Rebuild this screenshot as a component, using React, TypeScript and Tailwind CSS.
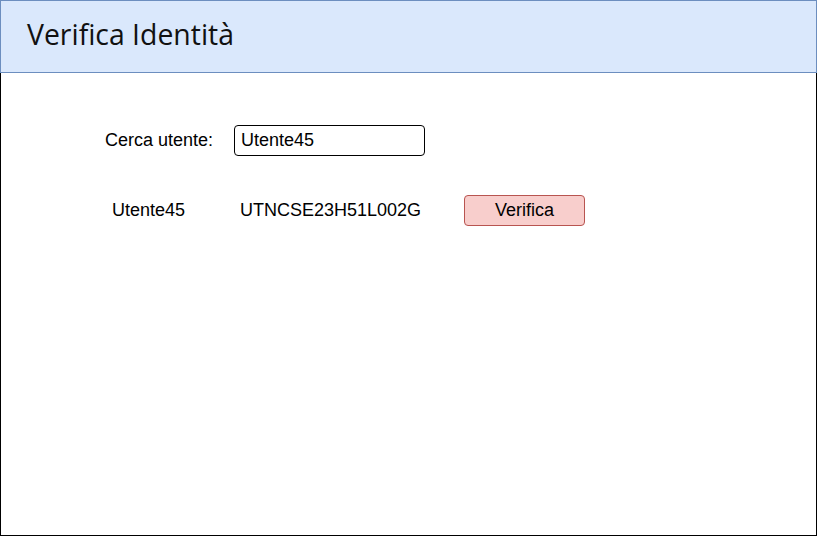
export default function App() {
  return (
    <div className="w-[817px] h-[536px] flex flex-col bg-white" style={{ fontFamily: '"Liberation Sans", Arial, sans-serif' }}>
      <div className="h-[73px] shrink-0 bg-[#dae8fc] border border-[#6c8ebf] flex items-center pl-[26px] pb-[4px]">
        <span className="text-[28.4px] text-[#111] leading-none" style={{ fontFamily: '"Open Sans", "Noto Sans", sans-serif' }}>Verifica Identità</span>
      </div>
      <div className="flex-1 border-x border-b border-black flex flex-col text-[18px] text-black">
        <div className="flex items-center mt-[51px] h-[32px]">
          <span className="ml-[104px] w-[129px]">Cerca utente:</span>
          <div className="w-[191px] h-[31px] border border-black rounded-[4px] flex items-center pl-[6px]">Utente45</div>
        </div>
        <div className="flex items-center mt-[38px] h-[32px]">
          <span className="ml-[111px] w-[128px]">Utente45</span>
          <span className="w-[224px]">UTNCSE23H51L002G</span>
          <div className="w-[121px] h-[31px] bg-[#f8cecc] border border-[#b85450] rounded-[4px] flex items-center justify-center">Verifica</div>
        </div>
      </div>
    </div>
  );
}
